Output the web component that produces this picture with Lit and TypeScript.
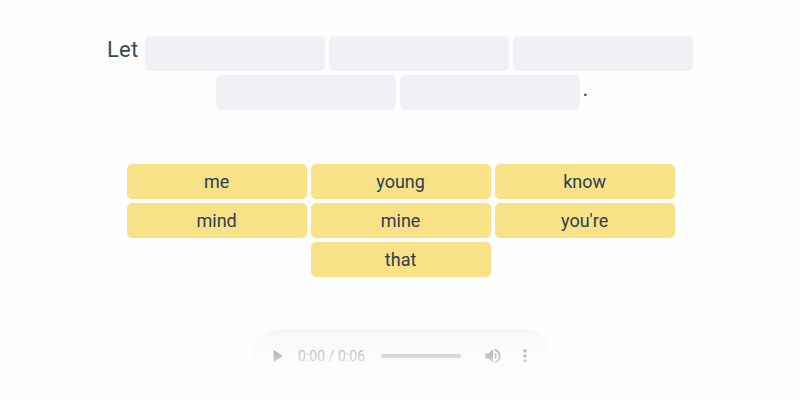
import { LitElement, html, css } from "lit";
import { customElement } from "lit/decorators.js";

@customElement("audio-bar")
class AudioBar extends LitElement {
  static styles = css`
    :host {
      display: block;
      position: relative;
      width: 300px;
      height: 54px;
    }
    .bar {
      display: flex;
      align-items: center;
      box-sizing: border-box;
      width: 300px;
      height: 54px;
      padding: 0 15px 0 17px;
      border-radius: 27px;
      background: #f1f3f4;
      font: 14px/20px Roboto, sans-serif;
      color: #1d1d1d;
    }
    .icon {
      width: 20px;
      height: 20px;
      flex: none;
      display: block;
      fill: #000;
    }
    .time {
      margin-left: 10px;
      width: 68px;
      white-space: nowrap;
      letter-spacing: 0.03px;
    }
    .track {
      width: 80px;
      height: 4px;
      margin-left: 15px;
      border-radius: 2px;
      background: #606161;
    }
    .volume {
      margin-left: 22px;
    }
    .more {
      margin-left: 12px;
    }
    .fade {
      position: absolute;
      inset: 0;
      background: linear-gradient(
        rgba(254, 254, 254, 0.4) 0,
        rgba(254, 254, 254, 0.68) 20px,
        rgba(254, 254, 254, 0.82) 32px,
        #fefefe 48px
      );
    }
  `;
  render() {
    return html`
      <div class="bar">
        <svg class="icon" viewBox="0 0 20 20"><path d="M5.500 4v12l9.500-6z" /></svg>
        <span class="time">0:00 / 0:06</span>
        <div class="track"></div>
        <svg class="icon volume" viewBox="0 0 24 24">
          <path
            d="M3 9v6h4l5 5V4L7 9H3zm13.500 3c0-1.770-1.020-3.290-2.500-4.030v8.050c1.480-.73 2.500-2.250 2.500-4.020zM14 3.230v2.060c2.890.86 5 3.540 5 6.710s-2.110 5.850-5 6.710v2.060c4.010-.91 7-4.490 7-8.770s-2.990-7.860-7-8.770z"
          />
        </svg>
        <svg class="icon more" viewBox="0 0 24 24">
          <path
            d="M12 8c1.100 0 2-.9 2-2s-.9-2-2-2-2 .9-2 2 .9 2 2 2zm0 2c-1.100 0-2 .9-2 2s.9 2 2 2 2-.9 2-2-.9-2-2-2zm0 6c-1.100 0-2 .9-2 2s.9 2 2 2 2-.9 2-2-.9-2-2-2z"
          />
        </svg>
      </div>
      <div class="fade"></div>
    `;
  }
}

@customElement("app-root")
class AppRoot extends LitElement {
  static styles = css`
    :host {
      display: block;
      box-sizing: border-box;
      height: 400px;
      padding-top: 36px;
      overflow: hidden;
      background: #fefefe;
      color: #2c3e50;
      font-family: Roboto, sans-serif;
    }
    .row {
      display: flex;
      justify-content: center;
      gap: 4px;
      height: 35px;
      margin-bottom: 4px;
    }
    .text {
      font-size: 22px;
      line-height: 27px;
      letter-spacing: 0.2px;
      color: #34495e;
    }
    .let {
      width: 34px;
    }
    .dot {
      width: 2px;
      margin-left: -1px;
    }
    .slot,
    .word {
      width: 180px;
      height: 35px;
      border-radius: 5px;
      background: #f0f1f5;
    }
    .bank {
      display: flex;
      flex-wrap: wrap;
      justify-content: center;
      gap: 4px;
      width: 548px;
      margin: 54px 0 0 127px;
    }
    .word {
      background: #f8e187;
      font-size: 18px;
      line-height: 35px;
      text-indent: -0.8px;
      text-align: center;
    }
    .player {
      margin: 52px 0 0 251px;
    }
  `;
  words = ["me", "young", "know", "mind", "mine", "you're", "that"];
  render() {
    return html`
      <div class="row">
        <span class="text let">Let</span>
        <div class="slot"></div>
        <div class="slot"></div>
        <div class="slot"></div>
      </div>
      <div class="row">
        <div class="slot"></div>
        <div class="slot"></div>
        <span class="text dot">.</span>
      </div>
      <div class="bank">
        ${this.words.map((w) => html`<div class="word">${w}</div>`)}
      </div>
      <audio-bar class="player"></audio-bar>
    `;
  }
}
